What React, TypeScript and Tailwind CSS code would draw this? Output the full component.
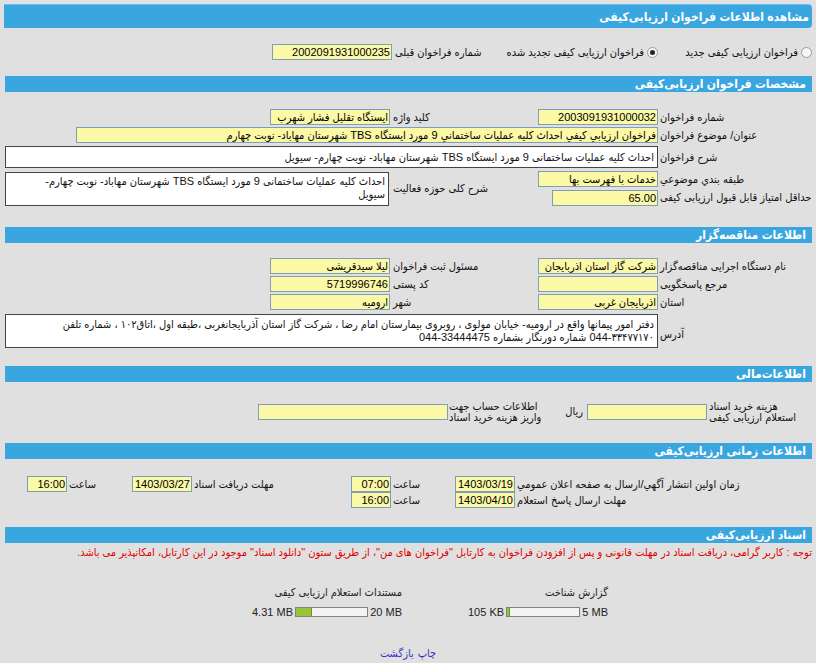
import React from "react";

function Inp({ className, children }: { className: string; children?: React.ReactNode }) {
  return (
    <div
      className={
        "h-[16px] shrink-0 bg-[#fbf8a6] border border-[#7f9db9] leading-[14px] pr-[1px] overflow-hidden whitespace-nowrap text-black " +
        className
      }
    >
      {children}
    </div>
  );
}

function Head({ children }: { children: React.ReactNode }) {
  return (
    <div className="h-[16px] ml-[1px] bg-[#3aa6e0] text-white font-bold text-[12px] leading-[16px] pr-[6px] whitespace-nowrap">
      {children}
    </div>
  );
}

function Radio({ checked }: { checked?: boolean }) {
  return (
    <span className="w-[11px] h-[11px] shrink-0 rounded-full border border-[#9a9a9a] bg-[#f6f6f6] flex items-center justify-center">
      {checked ? <span className="w-[5px] h-[5px] rounded-full bg-[#222]" /> : null}
    </span>
  );
}

function SizeBar({ right, left, pct }: { right: string; left: string; pct: number }) {
  return (
    <div className="flex items-center h-[12px] whitespace-nowrap">
      <span dir="ltr" className="leading-[12px] whitespace-nowrap">{right}</span>
      <div className="w-[82px] h-[10px] border border-[#808080] bg-[#f3f3f3] flex justify-end mx-[2px]">
        <div className="h-full bg-[#99c43a] border-r border-[#6f8f2a]" style={{ width: `${pct}%` }} />
      </div>
      <span dir="ltr" className="leading-[12px] whitespace-nowrap">{left}</span>
    </div>
  );
}

export default function App() {
  return (
    <div
      dir="rtl"
      className="w-[816px] h-[663px] overflow-hidden bg-[#e0e0e0] px-[4px] pt-[4px] text-[11px] text-[#111] font-['Liberation_Sans','DejaVu_Sans_Condensed','DejaVu_Sans',sans-serif]"
    >
      <div className="h-[24px] bg-[#3aa6e0] text-white font-bold text-[12px] leading-[24px] pr-[3px] rounded-r-[4px] border-t border-[#6cc0ec]">
        مشاهده اطلاعات فراخوان ارزیابی‌کیفی
      </div>

      <div className="mt-[15px] h-[18px] flex items-center whitespace-nowrap">
        <div className="w-[152px] flex items-center gap-[3px]">
          <Radio />
          <span>فراخوان ارزیابی کیفی جدید</span>
        </div>
        <div className="w-[170px] flex items-center gap-[3px] mr-[2px]">
          <Radio checked />
          <span>فراخوان ارزیابی کیفی تجدید شده</span>
        </div>
        <div className="w-[93px] text-left">شماره فراخوان قبلی</div>
        <Inp className="w-[120px] mr-[3px]">2002091931000235</Inp>
      </div>

      <div className="mt-[15px]">
        <Head>مشخصات فراخوان ارزیابی‌کیفی</Head>
      </div>

      <div className="mt-[16px] grid grid-cols-[152px_124px_143px_1fr] grid-rows-[18px_18px_26px_18px_19px] items-center whitespace-nowrap">
        <div className="text-left">شماره فراخوان</div>
        <Inp className="w-[120px] mr-[2px]">2003091931000032</Inp>
        <div className="text-left">کلید واژه</div>
        <Inp className="w-[120px] mr-[3px]">ایستگاه تقلیل فشار شهرب</Inp>

        <div className="text-left">عنوان/ موضوع فراخوان</div>
        <Inp className="col-span-3 mr-[2px] ml-[72px]">
          فراخوان ارزيابي کيفي احداث کليه عمليات ساختماني 9 مورد ايستگاه TBS شهرستان مهاباد- نوبت چهارم
        </Inp>

        <div className="text-left">شرح فراخوان</div>
        <div className="col-span-3 mr-[2px] ml-[1px] h-[22px] bg-white border border-[#444] leading-[20px] pr-[3px] overflow-hidden">
          احداث کلیه عملیات ساختمانی 9 مورد ایستگاه TBS شهرستان مهاباد- نوبت چهارم- سیویل
        </div>

        <div className="text-left">طبقه بندي موضوعي</div>
        <Inp className="w-[120px] mr-[2px]">خدمات با فهرست بها</Inp>
        <div className="row-span-2 text-left">شرح کلی حوزه فعالیت</div>
        <div className="row-span-2 h-[34px] mr-[4px] ml-[1px] bg-white border border-[#444] leading-[13px] pr-[3px] pt-[2px] whitespace-normal overflow-hidden">
          احداث کلیه عملیات ساختمانی 9 مورد ایستگاه TBS شهرستان مهاباد- نوبت چهارم-
          <br />
          سیویل
        </div>

        <div className="text-left">حداقل امتیاز قابل قبول ارزیابی کیفی</div>
        <Inp className="w-[106px] mr-[2px]">65.00</Inp>
      </div>

      <div className="mt-[20px]">
        <Head>اطلاعات مناقصه‌گزار</Head>
      </div>

      <div className="mt-[14px] grid grid-cols-[152px_124px_143px_1fr] grid-rows-[18px_18px_18px_37px] items-center whitespace-nowrap">
        <div className="text-left">نام دستگاه اجرایی مناقصه‌گزار</div>
        <Inp className="w-[120px] mr-[2px]">شرکت گاز استان اذربایجان</Inp>
        <div className="text-left">مسئول ثبت فراخوان</div>
        <Inp className="w-[120px] mr-[3px]">لیلا سیدقریشی</Inp>

        <div className="text-left">مرجع پاسخگویی</div>
        <Inp className="w-[120px] mr-[2px]" />
        <div className="text-left">کد پستی</div>
        <Inp className="w-[120px] mr-[3px]">5719996746</Inp>

        <div className="text-left">استان</div>
        <Inp className="w-[120px] mr-[2px]">اذربایجان غربی</Inp>
        <div className="text-left">شهر</div>
        <Inp className="w-[120px] mr-[3px]">ارومیه</Inp>

        <div className="text-left self-center pt-[10px]">آدرس</div>
        <div className="col-span-3 self-end mr-[2px] ml-[1px] h-[34px] bg-white border border-[#444] leading-[13px] pr-[3px] pt-[3px] whitespace-nowrap overflow-hidden">
          دفتر امور پیمانها واقع در ارومیه- خیابان مولوی ، روبروی بیمارستان امام رضا ، شرکت گاز استان آذربایجانغربی ،طبقه اول ،اتاق۱۰۲ ، شماره تلفن
          <br />
          044-۳۳۴۷۷۱۷۰ شماره دورنگار بشماره 33444475-044
        </div>
      </div>

      <div className="mt-[18px]">
        <Head>اطلاعات‌مالی</Head>
      </div>

      <div className="mt-[20px] h-[19px] flex items-center whitespace-nowrap">
        <div className="w-[103px] text-left leading-[11px]">
          <div>هزینه خرید اسناد</div>
          <div>استعلام ارزیابی کیفی</div>
        </div>
        <Inp className="w-[120px] mr-[2px]" />
        <div className="w-[44px] pr-[4px] text-right">ریال</div>
        <div className="w-[94px] text-left leading-[11px]">
          <div>اطلاعات حساب جهت</div>
          <div>واریز هزینه خرید اسناد</div>
        </div>
        <Inp className="w-[190px] mr-[1px]" />
      </div>

      <div className="mt-[22px]">
        <Head>اطلاعات زمانی ارزیابی‌کیفی</Head>
      </div>

      <div className="mt-[17px] grid grid-cols-[295px_62px_62px_42px_157px_62px_63px_42px] grid-rows-[16px_16px] items-center whitespace-nowrap">
        <div className="text-left">زمان اولین انتشار آگهي/ارسال به صفحه اعلان عمومي</div>
        <Inp className="w-[60px] mr-[2px]">1403/03/19</Inp>
        <div className="text-left">ساعت</div>
        <Inp className="w-[40px] mr-[2px]">07:00</Inp>
        <div className="text-left">مهلت دریافت اسناد</div>
        <Inp className="w-[60px] mr-[2px]">1403/03/27</Inp>
        <div className="text-left">ساعت</div>
        <Inp className="w-[40px] mr-[2px]">16:00</Inp>

        <div className="text-left">مهلت ارسال پاسخ استعلام</div>
        <Inp className="w-[60px] mr-[2px]">1403/04/10</Inp>
        <div className="text-left">ساعت</div>
        <Inp className="w-[40px] mr-[2px]">16:00</Inp>
      </div>

      <div className="mt-[19px]">
        <Head>اسناد ارزیابی‌کیفی</Head>
      </div>

      <div className="mt-[2px] h-[14px] leading-[14px] text-[#e00000] whitespace-nowrap">
        توجه : کاربر گرامی، دریافت اسناد در مهلت قانونی و پس از افزودن فراخوان به کارتابل "فراخوان های من"، از طریق ستون "دانلود اسناد" موجود در این کارتابل، امکانپذیر می باشد.
      </div>

      <div className="mt-[26px] flex pr-[204px] text-[#222]">
        <div className="w-[140px] flex flex-col">
          <div className="h-[14px] leading-[14px]">گزارش شناخت</div>
          <div className="mt-[7px]">
            <SizeBar right="5 MB" left="105 KB" pct={4} />
          </div>
        </div>
        <div className="mr-[66px] w-[150px] flex flex-col">
          <div className="h-[14px] leading-[14px]">مستندات استعلام ارزیابی کیفی</div>
          <div className="mt-[7px]">
            <SizeBar right="20 MB" left="4.31 MB" pct={22} />
          </div>
        </div>
      </div>

      <div className="mt-[28px] h-[14px] leading-[14px] flex justify-center gap-[4px] text-[#3434c8]">
        <span>چاپ</span>
        <span>بازگشت</span>
      </div>
    </div>
  );
}
